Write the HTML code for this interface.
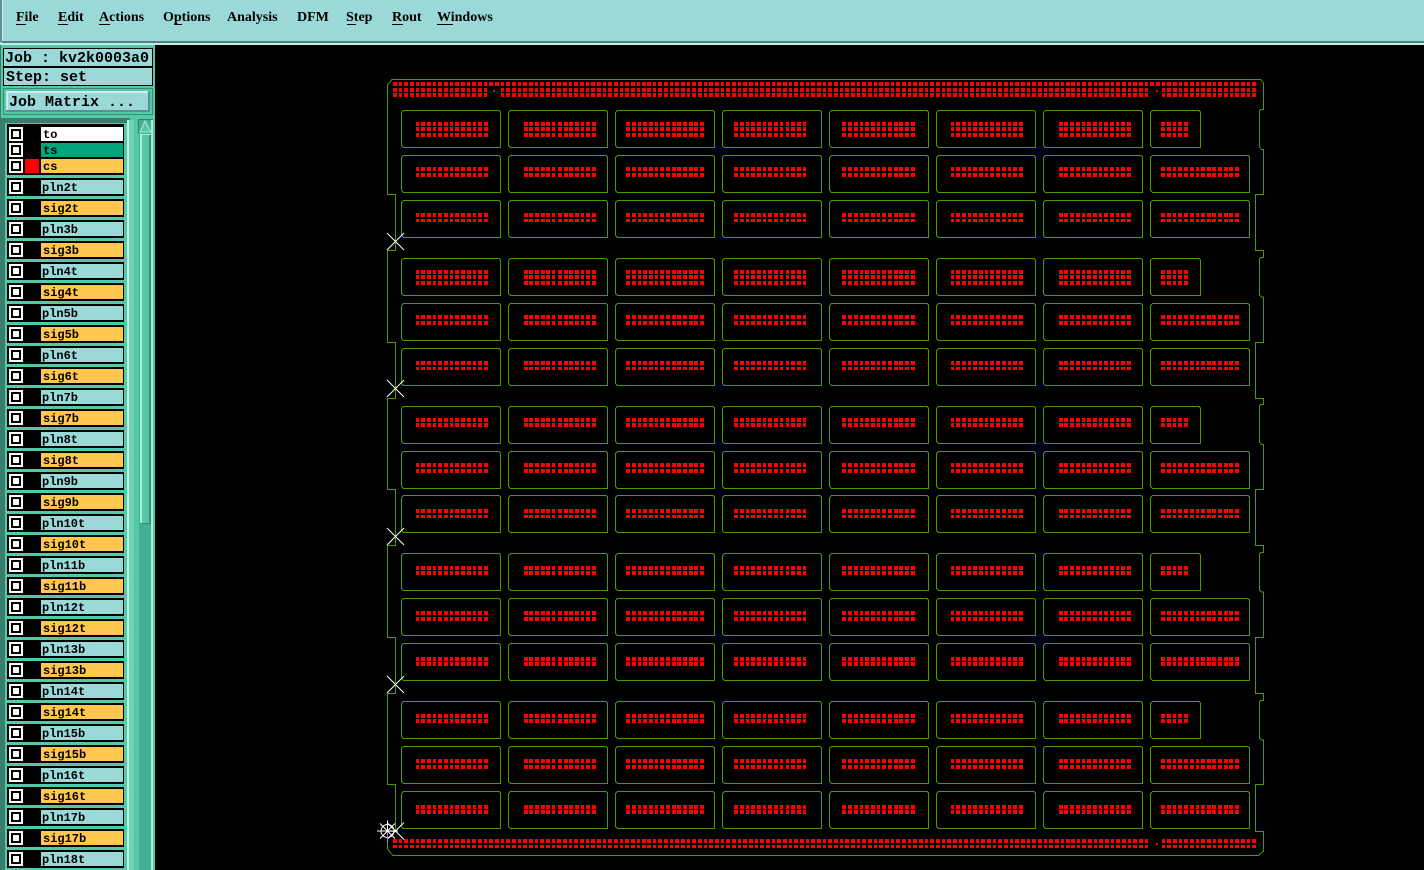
<!DOCTYPE html>
<html><head><meta charset="utf-8"><title>Job Matrix</title>
<style>
html,body{margin:0;padding:0;background:#000;width:1424px;height:870px;overflow:hidden}
svg{display:block;position:absolute;left:0;top:0}
.m{font:bold 14px "Liberation Serif",serif;fill:#000}
.l{font:bold 12px "Liberation Mono",monospace;fill:#000}
.j{font:bold 15px "Liberation Mono",monospace;fill:#000}
</style></head><body>
<svg width="1424" height="870" viewBox="0 0 1424 870" shape-rendering="crispEdges" xmlns="http://www.w3.org/2000/svg">
<defs>
<clipPath id="h3"><rect x="0" y="0" width="1424" height="3"/></clipPath>
<path id="ra" fill="#f00" d="M0 0h3v4h-3zM5 0h4v4h-4zM11 0h4v4h-4zM17 0h3v4h-3zM22 0h4v4h-4zM28 0h4v4h-4zM34 0h3v4h-3zM39 0h4v4h-4zM45 0h4v4h-4zM51 0h4v4h-4zM57 0h3v4h-3zM62 0h4v4h-4zM68 0h4v4h-4z"/>
<path id="rb" fill="#f00" d="M0 0h4v4h-4zM5 0h4v4h-4zM11 0h4v4h-4zM17 0h4v4h-4zM22 0h4v4h-4zM28 0h3v4h-3zM34 0h4v4h-4zM40 0h4v4h-4zM45 0h4v4h-4zM51 0h4v4h-4zM57 0h3v4h-3zM62 0h4v4h-4zM68 0h4v4h-4z"/>
<path id="rc" fill="#f00" d="M0 0h4v4h-4zM6 0h4v4h-4zM12 0h3v4h-3zM17 0h4v4h-4zM23 0h4v4h-4zM29 0h3v4h-3zM34 0h4v4h-4zM40 0h4v4h-4zM46 0h4v4h-4zM51 0h4v4h-4zM57 0h4v4h-4zM63 0h4v4h-4zM68 0h4v4h-4zM74 0h4v4h-4z"/>
<path id="rd" fill="#f00" d="M0 0h4v4h-4zM6 0h4v4h-4zM12 0h3v4h-3zM17 0h4v4h-4zM23 0h4v4h-4zM29 0h3v4h-3zM34 0h4v4h-4zM40 0h4v4h-4zM46 0h3v4h-3zM52 0h3v4h-3zM57 0h4v4h-4zM63 0h4v4h-4zM69 0h3v4h-3z"/>
<path id="re" fill="#f00" d="M0 0h4v4h-4zM6 0h4v4h-4zM12 0h4v4h-4zM18 0h3v4h-3zM23 0h4v4h-4zM29 0h4v4h-4zM35 0h3v4h-3zM40 0h4v4h-4zM46 0h4v4h-4zM52 0h4v4h-4zM57 0h4v4h-4zM63 0h4v4h-4zM69 0h4v4h-4z"/>
<path id="rf" fill="#f00" d="M0 0h4v4h-4zM5 0h4v4h-4zM11 0h4v4h-4zM17 0h4v4h-4zM23 0h3v4h-3zM28 0h4v4h-4zM34 0h4v4h-4zM40 0h3v4h-3zM45 0h4v4h-4zM51 0h4v4h-4zM57 0h3v4h-3zM62 0h4v4h-4zM68 0h4v4h-4z"/>
<path id="rg" fill="#f00" d="M0 0h4v4h-4zM6 0h4v4h-4zM12 0h3v4h-3zM17 0h4v4h-4zM23 0h4v4h-4zM29 0h4v4h-4zM35 0h3v4h-3zM40 0h4v4h-4zM46 0h4v4h-4zM51 0h4v4h-4zM57 0h4v4h-4zM63 0h4v4h-4zM68 0h4v4h-4zM74 0h4v4h-4z"/>
<path id="r5" fill="#f00" d="M0 0h4v4h-4zM6 0h4v4h-4zM12 0h3v4h-3zM17 0h4v4h-4zM23 0h4v4h-4z"/>
<g id="C7">
<use href="#ra" x="416"/>
<use href="#rb" x="524"/>
<use href="#rc" x="626"/>
<use href="#rd" x="734"/>
<use href="#re" x="842"/>
<use href="#ra" x="951"/>
<use href="#rf" x="1059"/>
</g>
<g id="W"><use href="#C7"/><use href="#rg" x="1161"/></g>
<g id="S"><use href="#C7"/><use href="#r5" x="1161"/></g>
<g id="W3" clip-path="url(#h3)"><use href="#W"/></g>
<path id="B17" fill="#f00" d="M0 0h4v4h-4zM6 0h3v4h-3zM11 0h4v4h-4z"/>
<g id="B85"><use href="#B17"/><use href="#B17" x="17"/><use href="#B17" x="34"/><use href="#B17" x="51"/><use href="#B17" x="68"/></g>
<g id="B">
<use href="#B85"/><use href="#B85" x="85"/><use href="#B85" x="170"/><use href="#B85" x="254"/><use href="#B85" x="339"/><use href="#B85" x="424"/><use href="#B85" x="509"/><use href="#B85" x="594"/><use href="#B85" x="678"/><use href="#B85" x="763"/><use href="#B17" x="848"/>
</g>
<g id="B3" clip-path="url(#h3)"><use href="#B"/></g>
<path id="P" d="M2.5 .5H98l1.5 1.5V37.5H2.5L.5 35.5V2.5Z" fill="none" stroke="#4c9a00"/>
<path id="Q" d="M2.5 .5H49L50.5 2V37.5H2.5L.5 35.5V2.5Z" fill="none" stroke="#4c9a00"/>
<g id="P7">
<use href="#P" x="401"/><use href="#P" x="508"/><use href="#P" x="615"/><use href="#P" x="722"/><use href="#P" x="829"/><use href="#P" x="936"/><use href="#P" x="1043"/>
</g>
<g id="PW"><use href="#P7"/><use href="#P" x="1150"/></g>
<g id="PS"><use href="#P7"/><use href="#Q" x="1150"/></g>
<g id="X" stroke="#fff" fill="none" shape-rendering="auto"><path d="M-8.5 -8.5L8.5 8.5M8.5 -8.5L-8.5 8.5"/></g>
<g id="K"><rect width="14" height="14" fill="#fff"/><rect x="2" y="2" width="10" height="10" fill="#000"/><rect x="4" y="4" width="6" height="6" fill="#fff"/></g>
<g id="T"><rect x="7" y="0" width="117" height="18" fill="#000"/><use href="#K" x="9" y="2"/><rect x="41" y="2" width="82" height="14" fill="#9bd9d9"/></g>
<g id="U"><rect x="7" y="0" width="117" height="18" fill="#000"/><use href="#K" x="9" y="2"/><rect x="41" y="2" width="82" height="14" fill="#ffc74f"/></g>
</defs>

<rect width="1424" height="870" fill="#000"/>

<!-- menu bar -->
<rect width="1424" height="45" fill="#9bd9d9"/>
<rect width="2" height="42" fill="#5f9090"/>
<rect x="2" width="1" height="41" fill="#c8eeee"/>
<rect x="2" y="41" width="1422" height="2" fill="#4f8484"/>
<rect x="0" y="43" width="1424" height="2" fill="#c4ecec"/>
<text class="m" x="16" y="21">File</text><rect x="16" y="24" width="10" height="1"/>
<text class="m" x="58" y="21">Edit</text><rect x="58" y="24" width="10" height="1"/>
<text class="m" x="99" y="21">Actions</text><rect x="99" y="24" width="11" height="1"/>
<text class="m" x="163" y="21">Options</text><rect x="174" y="24" width="8" height="1"/>
<text class="m" x="227" y="21">Analysis</text>
<text class="m" x="297" y="21">DFM</text>
<text class="m" x="346" y="21">Step</text><rect x="347" y="24" width="9" height="1"/>
<text class="m" x="392" y="21">Rout</text><rect x="392" y="24" width="11" height="1"/>
<text class="m" x="437" y="21">Windows</text><rect x="437" y="24" width="16" height="1"/>

<!-- sidebar -->
<rect x="0" y="45" width="155" height="825" fill="#54c9a8"/>
<rect x="0" y="45" width="1" height="825" fill="#3a7d6d"/>
<rect x="3" y="48" width="150" height="19" fill="#000"/>
<rect x="4" y="49" width="148" height="17" fill="#9bd9d9"/>
<rect x="3" y="67" width="150" height="19" fill="#000"/>
<rect x="4" y="68" width="148" height="17" fill="#9bd9d9"/>
<text class="j" x="5" y="62">Job : kv2k0003a0</text>
<text class="j" x="6" y="81">Step: set</text>
<rect x="3" y="88" width="150" height="27" fill="#3a8d73"/>
<rect x="4" y="89" width="148" height="25" fill="#54c9a8"/>
<rect x="6" y="91" width="144" height="21" fill="#5b9090"/>
<rect x="6" y="91" width="142" height="19" fill="#cdeeee"/>
<rect x="8" y="93" width="140" height="17" fill="#9bd9d9"/>
<text class="j" x="9" y="106">Job Matrix ...</text>

<!-- list area -->
<rect x="0" y="118" width="130" height="752" fill="#3a7d6d"/>
<rect x="5" y="123" width="122" height="747" fill="#54c9a8"/>
<rect x="127" y="120" width="2" height="750" fill="#c0f0e0"/>
<rect x="129" y="120" width="5" height="750" fill="#6fd4b6"/>
<rect x="134" y="118" width="21" height="752" fill="#54c9a8"/>
<rect x="138" y="119" width="15" height="14" fill="#3a7d6d"/>
<rect x="139" y="120" width="12" height="750" fill="#45ae95"/>
<rect x="151" y="120" width="2" height="750" fill="#a8ead8"/>
<path d="M145 121L151 132H140Z" fill="#54c9a8" stroke="#a8ead8" shape-rendering="auto"/>
<rect x="140" y="134" width="11" height="390" fill="#54c9a8"/>
<rect x="140" y="134" width="2" height="390" fill="#b0eedc"/>
<rect x="140" y="134" width="11" height="1" fill="#b0eedc"/>
<rect x="149" y="135" width="2" height="389" fill="#3a8d73"/>
<rect x="140" y="523" width="11" height="1" fill="#3a8d73"/>

<rect x="7" y="124" width="117" height="51" fill="#000"/>
<use href="#K" x="9" y="127"/><use href="#K" x="9" y="143"/><use href="#K" x="9" y="159"/>
<rect x="25" y="159" width="14" height="14" fill="#f00"/>
<rect x="41" y="127" width="82" height="14" fill="#fff"/>
<rect x="41" y="143" width="82" height="14" fill="#00a67a"/>
<rect x="41" y="159" width="82" height="14" fill="#ffc74f"/>
<text class="l" x="43" y="138">to</text>
<text class="l" x="43" y="154">ts</text>
<text class="l" x="43" y="170">cs</text>

<use href="#T" y="178"/><text class="l" x="42" y="191">pln2t</text>
<use href="#U" y="199"/><text class="l" x="43" y="212">sig2t</text>
<use href="#T" y="220"/><text class="l" x="42" y="233">pln3b</text>
<use href="#U" y="241"/><text class="l" x="43" y="254">sig3b</text>
<use href="#T" y="262"/><text class="l" x="42" y="275">pln4t</text>
<use href="#U" y="283"/><text class="l" x="43" y="296">sig4t</text>
<use href="#T" y="304"/><text class="l" x="42" y="317">pln5b</text>
<use href="#U" y="325"/><text class="l" x="43" y="338">sig5b</text>
<use href="#T" y="346"/><text class="l" x="42" y="359">pln6t</text>
<use href="#U" y="367"/><text class="l" x="43" y="380">sig6t</text>
<use href="#T" y="388"/><text class="l" x="42" y="401">pln7b</text>
<use href="#U" y="409"/><text class="l" x="43" y="422">sig7b</text>
<use href="#T" y="430"/><text class="l" x="42" y="443">pln8t</text>
<use href="#U" y="451"/><text class="l" x="43" y="464">sig8t</text>
<use href="#T" y="472"/><text class="l" x="42" y="485">pln9b</text>
<use href="#U" y="493"/><text class="l" x="43" y="506">sig9b</text>
<use href="#T" y="514"/><text class="l" x="42" y="527">pln10t</text>
<use href="#U" y="535"/><text class="l" x="43" y="548">sig10t</text>
<use href="#T" y="556"/><text class="l" x="42" y="569">pln11b</text>
<use href="#U" y="577"/><text class="l" x="43" y="590">sig11b</text>
<use href="#T" y="598"/><text class="l" x="42" y="611">pln12t</text>
<use href="#U" y="619"/><text class="l" x="43" y="632">sig12t</text>
<use href="#T" y="640"/><text class="l" x="42" y="653">pln13b</text>
<use href="#U" y="661"/><text class="l" x="43" y="674">sig13b</text>
<use href="#T" y="682"/><text class="l" x="42" y="695">pln14t</text>
<use href="#U" y="703"/><text class="l" x="43" y="716">sig14t</text>
<use href="#T" y="724"/><text class="l" x="42" y="737">pln15b</text>
<use href="#U" y="745"/><text class="l" x="43" y="758">sig15b</text>
<use href="#T" y="766"/><text class="l" x="42" y="779">pln16t</text>
<use href="#U" y="787"/><text class="l" x="43" y="800">sig16t</text>
<use href="#T" y="808"/><text class="l" x="42" y="821">pln17b</text>
<use href="#U" y="829"/><text class="l" x="43" y="842">sig17b</text>
<use href="#T" y="850"/><text class="l" x="42" y="863">pln18t</text>

<!-- board outline -->
<path fill="none" stroke="#4c9a00" d="M392 79.5H1260.5L1263.5 83V109.5H1261L1259.5 111V147L1261.5 149.5H1263.5V194.5H1255.5V250.5H1263.5V257.5H1261L1259.5 259V295L1261.5 297H1263.5V342.5H1255.5V398.5H1263.5V404.5H1261L1259.5 406V442L1261.5 444.5H1263.5V489.5H1255.5V545.5H1263.5V552.5H1261L1259.5 554V590L1261.5 592H1263.5V637.5H1255.5V693.5H1263.5V700.5H1261L1259.5 702V738L1261.5 740H1263.5V784.5H1255.5V831.5H1263.5V851L1258.5 855.5H393L387.5 849V831.5H395.5V784.5H387.5V693.5H395.5V637.5H387.5V545.5H395.5V489.5H387.5V398.5H395.5V342.5H387.5V250.5H395.5V194.5H387.5V85Z"/>

<!-- bands -->
<use href="#B" x="393" y="82"/>
<use href="#B" x="393" y="88"/>
<use href="#B" x="393" y="93"/>
<use href="#B" x="393" y="839"/>
<use href="#B3" x="393" y="845"/>
<rect x="488" y="88" width="13" height="9" fill="#000"/>
<rect x="1149" y="88" width="12" height="9" fill="#000"/>
<rect x="493" y="90" width="2" height="2" fill="#f00"/>
<rect x="1156" y="90" width="2" height="2" fill="#f00"/>
<rect x="1149" y="839" width="12" height="9" fill="#000"/>
<rect x="1156" y="843" width="2" height="2" fill="#f00"/>

<!-- panels -->
<use href="#PS" y="110"/><use href="#PW" y="155"/><use href="#PW" y="200"/>
<use href="#PS" y="258"/><use href="#PW" y="303"/><use href="#PW" y="348"/>
<use href="#PS" y="406"/><use href="#PW" y="451"/><use href="#PW" y="495"/>
<use href="#PS" y="553"/><use href="#PW" y="598"/><use href="#PW" y="643"/>
<use href="#PS" y="701"/><use href="#PW" y="746"/><use href="#PW" y="791"/>

<!-- pads -->
<use href="#S" y="122"/><use href="#S" y="127"/><use href="#S" y="133"/>
<use href="#W" y="167"/><use href="#W" y="173"/>
<use href="#W" y="213"/><use href="#W3" y="219"/>
<use href="#S" y="270"/><use href="#S" y="275"/><use href="#S" y="281"/>
<use href="#W" y="315"/><use href="#W" y="321"/>
<use href="#W" y="361"/><use href="#W3" y="367"/>
<use href="#S" y="418"/><use href="#S" y="423"/>
<use href="#W" y="463"/><use href="#W" y="469"/>
<use href="#W" y="509"/><use href="#W3" y="515"/>
<use href="#S" y="566"/><use href="#S" y="571"/>
<use href="#W" y="611"/><use href="#W" y="617"/>
<use href="#W" y="657"/><use href="#W" y="662"/>
<use href="#S" y="714"/><use href="#S" y="719"/>
<use href="#W" y="759"/><use href="#W" y="765"/>
<use href="#W" y="805"/><use href="#W" y="810"/>

<!-- markers -->
<use href="#X" x="395.5" y="241.5"/>
<use href="#X" x="395.5" y="388.5"/>
<use href="#X" x="395.5" y="536.5"/>
<use href="#X" x="395.5" y="684.5"/>
<use href="#X" x="395.5" y="831"/>
<g stroke="#fff" fill="none" shape-rendering="auto">
<circle cx="387.5" cy="831" r="6.5"/>
<path d="M377 831H398M387.5 820.5V841.5M380 823.5L395 838.5M395 823.5L380 838.5"/>
</g>
<rect x="387" y="832" width="1" height="9" fill="#a070e0"/>
</svg>
</body></html>
